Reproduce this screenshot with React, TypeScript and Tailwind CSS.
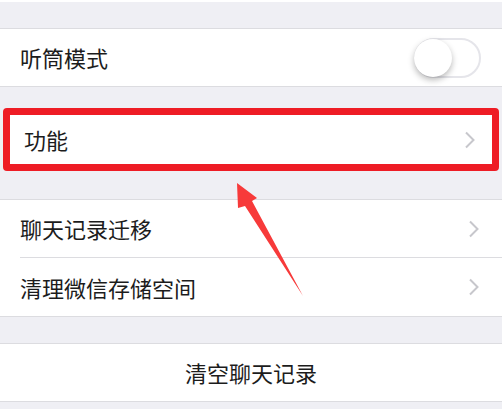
import React from 'react';

const font = { fontFamily: '"Noto Sans CJK SC", "Noto Sans", sans-serif' };

function Chevron() {
  return (
    <svg width="12" height="18" viewBox="0 0 12 18" className="shrink-0">
      <path d="M2 1.5 L9.5 9 L2 16.5" fill="none" stroke="#c7c7cc" strokeWidth="2" />
    </svg>
  );
}

function Row({ label, tall, children }: { label: string; tall?: boolean; children?: React.ReactNode }) {
  return (
    <div className={(tall ? 'h-[58px]' : 'h-[57px]') + ' flex items-center justify-between pl-[20px] pr-[22px]'}>
      <span className="text-[22px] text-[#1c1c1c]">{label}</span>
      {children}
    </div>
  );
}

export default function App() {
  return (
    <div className="relative w-[502px] h-[409px] overflow-hidden bg-[#efeff4]" style={font}>
      <div className="h-[2px] bg-white" />
      <div className="h-[26px]" />

      <div className="bg-white border-y border-[#dcdce0]">
        <Row label="听筒模式">
          <div className="w-[67px] h-[40px] rounded-full border-2 border-[#e5e5ea] bg-white flex items-center mr-[-1px]">
            <div className="w-[38px] h-[38px] rounded-full bg-white shadow-[0_3px_6px_rgba(0,0,0,0.28)] ml-[-2px]" />
          </div>
        </Row>
      </div>

      <div className="h-[21px]" />

      <div className="px-[3px]">
        <div className="h-[63px] bg-white border-[7px] border-[#ee1c25] rounded-[4px] flex items-center justify-between pl-[14px] pr-[16px]">
          <span className="text-[22px] text-[#1c1c1c]">功能</span>
          <Chevron />
        </div>
      </div>

      <div className="h-[28px]" />

      <div className="bg-white border-y border-[#dcdce0]">
        <Row label="聊天记录迁移">
          <Chevron />
        </Row>
        <div className="ml-[20px] h-px bg-[#dcdce0]" />
        <Row label="清理微信存储空间" tall>
          <Chevron />
        </Row>
      </div>

      <div className="h-[26px]" />

      <div className="bg-white border-y border-[#dcdce0]">
        <div className="h-[57px] flex items-center justify-center">
          <span className="text-[22px] text-[#1c1c1c]">清空聊天记录</span>
        </div>
      </div>

      <svg className="absolute left-0 top-0" width="502" height="409" viewBox="0 0 502 409">
        <polygon
          points="237,183 257,198 252,201 303,296 245,206 238,208"
          fill="#f73a3a"
        />
      </svg>
    </div>
  );
}
